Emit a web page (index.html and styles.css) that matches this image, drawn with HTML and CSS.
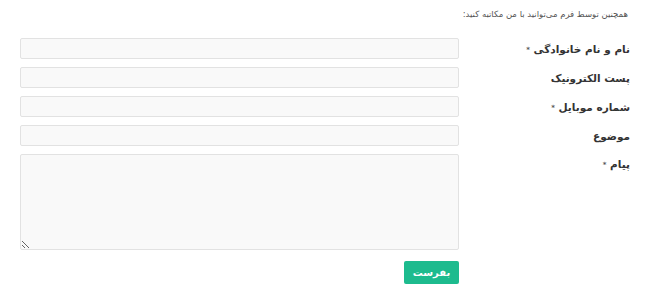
FILE: index.html
```html
<!DOCTYPE html>
<html lang="fa" dir="rtl">
<head>
  <meta charset="UTF-8" />
  <title>تماس با من</title>
  <link rel="stylesheet" href="styles.css">
</head>
<body>

  <div class="contacto">
    <p class="intro">همچنین توسط فرم می‌توانید با من مکاتبه کنید:</p>

    <form class="formulario">
      <div class="fila">
        <label class="etiqueta">نام و نام خانوادگی <span class="req">*</span></label>
        <input class="campo" type="text" />
      </div>
      <div class="fila">
        <label class="etiqueta">پست الکترونیک</label>
        <input class="campo" type="text" />
      </div>
      <div class="fila">
        <label class="etiqueta">شماره موبایل <span class="req">*</span></label>
        <input class="campo" type="text" />
      </div>
      <div class="fila">
        <label class="etiqueta">موضوع</label>
        <input class="campo" type="text" />
      </div>
      <div class="fila">
        <label class="etiqueta etiqueta-alta">پیام <span class="req">*</span></label>
        <textarea class="campo area"></textarea>
      </div>
      <div class="fila acciones">
        <span class="etiqueta"></span>
        <button type="button" class="enviar">بفرست</button>
      </div>
    </form>
  </div>

</body>
</html>
```

FILE: styles.css
```css
* { box-sizing: border-box; margin: 0; padding: 0; }

html, body {
  height: 100%;
  background: #fff;
}

body {
  font-family: 'DejaVu Sans', sans-serif;
  color: #333;
}

.contacto {
  padding: 7px 14px 0 20px;
}

.intro {
  font-size: 8.5px;
  color: #555;
  line-height: 14px;
  padding-right: 8px;
  margin-bottom: 17px;
}

.formulario {
  display: flex;
  flex-direction: column;
  gap: 8px;
}

.fila {
  display: flex;
  align-items: center;
}

.etiqueta {
  width: 177px;
  flex-shrink: 0;
  font-size: 10.5px;
  font-weight: bold;
  color: #333;
  padding-right: 6px;
}

.etiqueta-alta {
  align-self: flex-start;
  padding-top: 4px;
}

.req {
  font-size: 7px;
  color: #555;
  vertical-align: 1px;
}

.campo {
  width: 439px;
  height: 21px;
  background: #f9f9f9;
  border: 1px solid #e2e2e2;
  border-radius: 2px;
  font-family: inherit;
}

.area {
  height: 96px;
  resize: vertical;
}

.acciones {
  margin-top: 3px;
}

.enviar {
  width: 55px;
  height: 23px;
  margin-right: auto;
  margin-left: 384px;
  background: #1dbb8e;
  color: #fff;
  border: none;
  border-radius: 2px;
  font-family: inherit;
  font-size: 10px;
  font-weight: bold;
  cursor: pointer;
}
```
